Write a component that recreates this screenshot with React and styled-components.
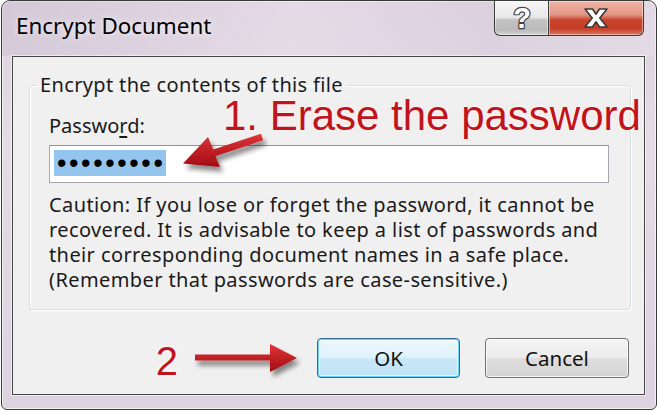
import React from "react";
import styled, { createGlobalStyle } from "styled-components";

const GlobalStyle = createGlobalStyle`
  html, body {
    margin: 0;
    padding: 0;
    background: #fff;
  }
  body {
    width: 660px;
    height: 412px;
    overflow: hidden;
    font-family: "Noto Sans", "DejaVu Sans", sans-serif;
    color: #1a1a1a;
  }
`;

const RED = "#c0141c";

const Window = styled.div`
  box-sizing: border-box;
  width: 656px;
  height: 410px;
  margin-left: 1px;
  border: 1px solid #3a3a3a;
  border-radius: 9px 9px 6px 6px;
  background: linear-gradient(180deg, #dcd2df 0%, #e4dbe6 35%, #ddd2e0 100%);
  box-shadow: inset 0 0 0 1px rgba(255, 255, 255, 0.65);
  display: flex;
  flex-direction: column;
  overflow: hidden;
`;

const TitleBar = styled.div`
  height: 55px;
  flex: none;
  display: flex;
  align-items: flex-start;
  background: linear-gradient(90deg, rgba(200, 188, 205, 0.45) 0%, rgba(240, 230, 240, 0.4) 45%, rgba(215, 203, 218, 0.3) 75%, rgba(235, 226, 236, 0.4) 100%);
`;

const Title = styled.div`
  padding: 10px 0 0 14px;
  font-size: 22.4px;
  line-height: 30px;
  color: #000;
  text-shadow: 0 0 6px rgba(255, 255, 255, 0.9);
`;

const CaptionButtons = styled.div`
  margin-left: auto;
  margin-right: 12px;
  display: flex;
`;

const CaptionButton = styled.div`
  box-sizing: border-box;
  width: ${(p) => (p.$close ? 95 : 55)}px;
  height: 35px;
  border: 1px solid #3b3b3b;
  border-top: none;
  border-left-width: ${(p) => (p.$close ? 0 : 1)}px;
  border-radius: ${(p) => (p.$close ? "0 0 6px 0" : "0 0 0 6px")};
  display: flex;
  align-items: center;
  justify-content: center;
  box-shadow: inset 0 0 0 1px rgba(255, 255, 255, 0.45);
  background: ${(p) =>
    p.$close
      ? "linear-gradient(180deg, #eeb3a5 0%, #e29886 40%, #c8432c 56%, #c63f29 82%, #db7a62 100%)"
      : "linear-gradient(180deg, #f7f7f7 0%, #e8e8e8 48%, #c2c2c2 56%, #bababa 85%, #d3d3d3 100%)"};
`;

const Client = styled.div`
  position: relative;
  flex: 1;
  margin: 0 11px 14px 10px;
  border: 1px solid #474747;
  background: #f0f0f0;
  box-shadow: 0 0 0 1px rgba(255, 255, 255, 0.55);
  display: flex;
  flex-direction: column;
  padding-top: 16px;
`;

const Group = styled.fieldset`
  margin: 0 13px 0 16px;
  padding: 0 21px 17px 19px;
  border: 1px solid #d5dfe5;
  border-radius: 3px;
  box-shadow: inset 1px 1px 0 #fff, 1px 1px 0 #fff;
  min-width: 0;
`;

const Legend = styled.legend`
  padding: 0 3px;
  margin-left: -12px;
  font-size: 20px;
  line-height: 24px;
  letter-spacing: 0.35px;
`;

const Label = styled.div`
  margin-top: 16px;
  font-size: 20px;
  line-height: 25px;
`;

const Key = styled.span`
  text-decoration: underline;
  text-underline-offset: 3px;
`;

const Field = styled.div`
  box-sizing: border-box;
  margin-top: 7px;
  height: 38px;
  border: 1px solid #a4a8ae;
  border-top-color: #8e939a;
  background: #fff;
  padding: 4px 0 0 4px;
`;

const Selected = styled.span`
  display: inline-block;
  height: 26px;
  padding: 0 1px 0 3px;
  background: #94c5ef;
  font-family: "Liberation Sans", Arial, sans-serif;
  font-size: 27px;
  line-height: 26px;
  letter-spacing: 2.6px;
  color: #000;
`;

const Caution = styled.p`
  margin: 9px 0 0;
  font-size: 20px;
  line-height: 25px;
  letter-spacing: 0.4px;
`;

const ButtonRow = styled.div`
  margin-top: 25px;
  padding-right: 15px;
  display: flex;
  align-items: center;
  justify-content: flex-end;
`;

const StepNumber = styled.div`
  padding-top: 6px;
  font-family: "Liberation Sans", Arial, sans-serif;
  font-size: 40px;
  line-height: 40px;
  color: ${RED};
  text-shadow: 0 0 4px #fff;
`;

const ArrowSvg = styled.svg`
  display: block;
  flex: none;
`;

const RightArrow = styled(ArrowSvg)`
  margin: 0 10px 0 14px;
`;

const Button = styled.div`
  box-sizing: border-box;
  width: ${(p) => (p.$default ? 143 : 144)}px;
  height: 40px;
  margin-left: ${(p) => (p.$default ? 0 : 25)}px;
  border: 1px solid ${(p) => (p.$default ? "#2f6a94" : "#707070")};
  border-radius: 4px;
  display: flex;
  align-items: center;
  justify-content: center;
  font-size: 20.5px;
  color: #111;
  background: ${(p) =>
    p.$default
      ? "linear-gradient(180deg, #edf7fd 0%, #e0f2fc 48%, #c9e8f8 52%, #bfe2f5 100%)"
      : "linear-gradient(180deg, #f4f4f4 0%, #ececec 48%, #dedede 52%, #d2d2d2 100%)"};
  box-shadow: ${(p) =>
    p.$default
      ? "inset 0 0 0 1px #6fd0f5, inset 0 0 0 2px rgba(255,255,255,0.6)"
      : "inset 0 0 0 1px rgba(255,255,255,0.8)"};
`;

const Note = styled.div`
  position: absolute;
  left: 210px;
  top: 38px;
  font-family: "Liberation Sans", Arial, sans-serif;
  font-size: 42px;
  line-height: 42px;
  color: ${RED};
  white-space: nowrap;
  text-shadow: 0 0 3px #fff, 0 0 6px rgba(255, 230, 230, 0.9);
`;

const PointerArrow = styled(ArrowSvg)`
  position: absolute;
  left: 162px;
  top: 68px;
`;

function ArrowDefs({ id }) {
  return (
    <defs>
      <linearGradient id={`${id}-fill`} x1="0" y1="0" x2="0" y2="1">
        <stop offset="0" stopColor="#e0353a" />
        <stop offset="1" stopColor="#a10c12" />
      </linearGradient>
      <filter id={`${id}-shadow`} x="-20%" y="-40%" width="150%" height="200%">
        <feDropShadow dx="3" dy="5" stdDeviation="2.5" floodColor="#000" floodOpacity="0.45" />
      </filter>
    </defs>
  );
}

export default function App() {
  return (
    <>
      <GlobalStyle />
      <Window>
        <TitleBar>
          <Title>Encrypt Document</Title>
          <CaptionButtons>
            <CaptionButton>
              <svg width="26" height="30" viewBox="0 0 26 30">
                <text
                  x="13"
                  y="25"
                  textAnchor="middle"
                  fontFamily="Liberation Sans, Arial, sans-serif"
                  fontWeight="700"
                  fontSize="29"
                  fill="#fff"
                  stroke="#404040"
                  strokeWidth="2.4"
                  strokeLinejoin="round"
                  paintOrder="stroke"
                >
                  ?
                </text>
              </svg>
            </CaptionButton>
            <CaptionButton $close>
              <svg width="26" height="22" viewBox="0 0 26 22">
                <path
                  d="M2 2h7.5l3.5 5.2 3.5-5.2H24l-7.2 9 7.2 9h-7.5L13 14.8 9.5 20H2l7.2-9z"
                  fill="#fff"
                  stroke="#3a3a3a"
                  strokeWidth="1.6"
                  strokeLinejoin="round"
                />
              </svg>
            </CaptionButton>
          </CaptionButtons>
        </TitleBar>

        <Client>
          <Group>
            <Legend>Encrypt the contents of this file</Legend>
            <Label>
              Passwo<Key>r</Key>d:
            </Label>
            <Field>
              <Selected>•••••••••</Selected>
            </Field>
            <Caution>
              Caution: If you lose or forget the password, it cannot be
              <br />
              recovered. It is advisable to keep a list of passwords and
              <br />
              their corresponding document names in a safe place.
              <br />
              (Remember that passwords are case-sensitive.)
            </Caution>
          </Group>

          <ButtonRow>
            <StepNumber>2</StepNumber>
            <RightArrow width="115" height="45" viewBox="0 0 115 45">
              <ArrowDefs id="a2" />
              <path
                d="M3 18.5H78V8L105 22L78 36V24.5H3z"
                fill="url(#a2-fill)"
                filter="url(#a2-shadow)"
              />
            </RightArrow>
            <Button $default>OK</Button>
            <Button>Cancel</Button>
          </ButtonRow>

          <Note>1. Erase the password</Note>
          <PointerArrow width="110" height="65" viewBox="0 0 110 65">
            <ArrowDefs id="a1" />
            <path
              d="M8 38.5L45 42L40.5 31.2L88.1 15.3L85.9 8.7L38.3 24.6L33 12z"
              fill="url(#a1-fill)"
              filter="url(#a1-shadow)"
            />
          </PointerArrow>
        </Client>
      </Window>
    </>
  );
}
